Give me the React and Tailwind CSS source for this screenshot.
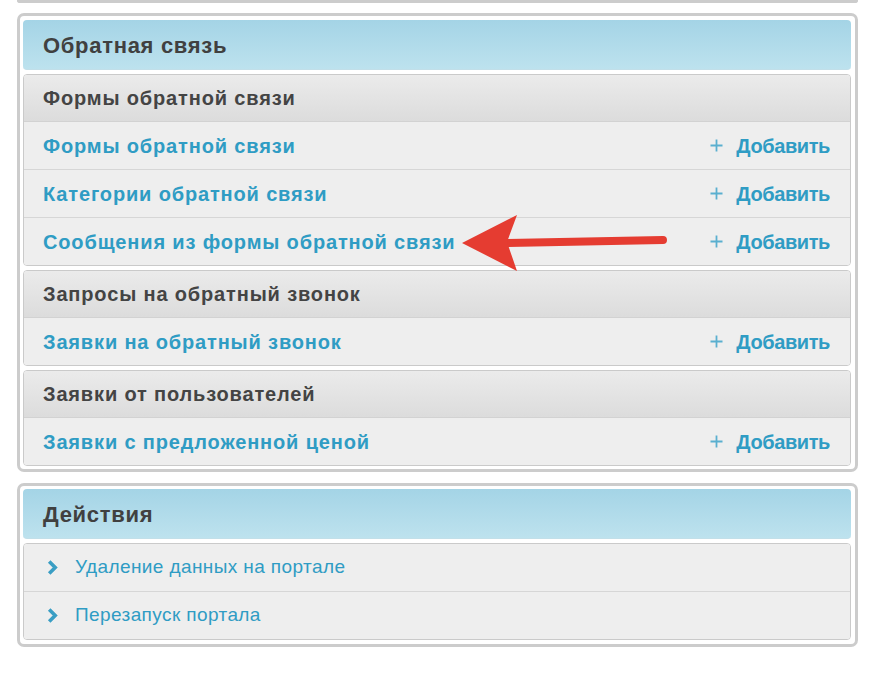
import React from "react";

const font = { fontFamily: '"Liberation Sans", Arial, sans-serif' };

function Plus() {
  return (
    <svg width="13" height="13" viewBox="0 0 13 13" className="shrink-0">
      <path d="M6.5 0.5v12M0.5 6.5h12" stroke="#5aafcf" strokeWidth="1.8" fill="none" />
    </svg>
  );
}

function Chevron() {
  return (
    <svg width="11" height="15" viewBox="0 0 11 15" className="shrink-0">
      <path d="M2.2 1.5l6 6-6 6" stroke="#3a9ec4" strokeWidth="3.6" fill="none" strokeLinejoin="miter" />
    </svg>
  );
}

function Header({ children }) {
  return (
    <div className="h-[50px] rounded-[4px] bg-gradient-to-b from-[#a4d4e6] to-[#bde2ee] flex items-center pl-[20px] pt-[2px] text-[22px] tracking-[0.7px] font-bold text-[#404040] border-b border-[#c2dfe9]">
      {children}
    </div>
  );
}

function Group({ title, items }) {
  return (
    <div className="border border-[#cacaca] rounded-[4px] overflow-hidden">
      <div className="h-[47px] bg-gradient-to-b from-[#ebebeb] to-[#dcdcdc] border-b border-[#d2d2d2] flex items-center pl-[19px] text-[20px] tracking-[0.85px] font-bold text-[#444]">
        {title}
      </div>
      {items.map((it, i) => (
        <div
          key={i}
          className={
            "bg-[#eeeeee] flex items-center justify-between pl-[19px] pr-[20px] " +
            (i < items.length - 1 ? "h-[48px] border-b border-[#d6d6d6]" : "h-[47px]")
          }
        >
          <span className="text-[20px] tracking-[0.85px] font-bold text-[#2f9cc4]">{it}</span>
          <span className="flex items-center gap-[13px] text-[20px] tracking-[-0.4px] font-bold text-[#2f9cc4]">
            <Plus />
            Добавить
          </span>
        </div>
      ))}
    </div>
  );
}

export default function App() {
  return (
    <div className="relative w-[886px] h-[678px] bg-white overflow-hidden" style={font}>
      <div className="ml-[17px] w-[841px] h-[3px] border-[3px] border-t-0 border-[#cccccc] rounded-b-[6px]" />

      <div className="ml-[17px] mt-[10px] w-[841px] border-[3px] border-[#cccccc] rounded-[7px] pl-[3px] pr-[4px] pt-[4px] pb-[3px] flex flex-col gap-[4px]">
        <Header>Обратная связь</Header>
        <Group
          title="Формы обратной связи"
          items={["Формы обратной связи", "Категории обратной связи", "Сообщения из формы обратной связи"]}
        />
        <Group title="Запросы на обратный звонок" items={["Заявки на обратный звонок"]} />
        <Group title="Заявки от пользователей" items={["Заявки с предложенной ценой"]} />
      </div>

      <div className="ml-[17px] mt-[11px] w-[841px] border-[3px] border-[#cccccc] rounded-[7px] pl-[3px] pr-[4px] pt-[3px] pb-[4px] flex flex-col gap-[4px]">
        <Header>Действия</Header>
        <div className="border border-[#cacaca] rounded-[4px] overflow-hidden">
          {["Удаление данных на портале", "Перезапуск портала"].map((t, i) => (
            <div
              key={i}
              className={
                "bg-[#eeeeee] flex items-center pl-[23px] gap-[17px] text-[19px] tracking-[0.4px] text-[#2f9cc4] " +
                (i === 0 ? "h-[48px] border-b border-[#d6d6d6]" : "h-[47px]")
              }
            >
              <Chevron />
              {t}
            </div>
          ))}
        </div>
      </div>

      <svg className="absolute left-0 top-0 pointer-events-none" width="886" height="678" viewBox="0 0 886 678">
        <line x1="505" y1="243" x2="663" y2="240" stroke="#e53c31" strokeWidth="8" strokeLinecap="round" />
        <polygon points="462,243 517,215 507,242 517,271" fill="#e53c31" />
      </svg>
    </div>
  );
}
